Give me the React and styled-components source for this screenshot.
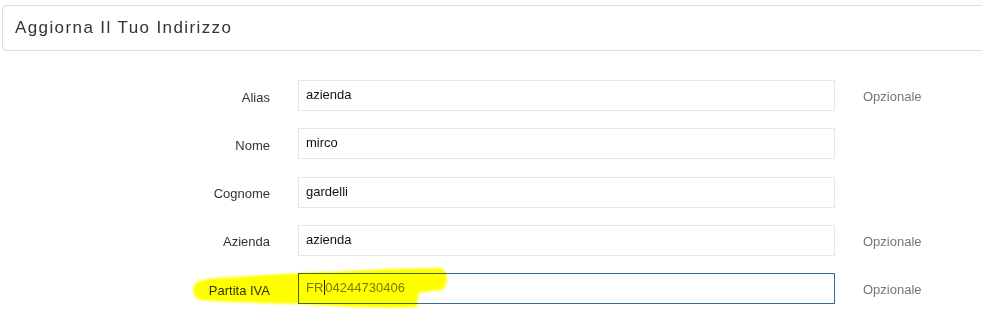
import React from 'react'
import styled, { createGlobalStyle } from 'styled-components'

const GlobalStyle = createGlobalStyle`
  html, body {
    margin: 0;
    padding: 0;
    background: #fff;
    overflow: hidden;
  }
  body {
    font-family: "Liberation Sans", Arial, sans-serif;
    color: #333;
  }
`

const Page = styled.div`
  padding: 5px 0 0 2px;
  width: 982px;
  height: 321px;
  box-sizing: border-box;
`

const Panel = styled.div`
  width: 1000px;
  height: 46px;
  box-sizing: border-box;
  border: 1px solid #dedede;
  border-radius: 4px;
  display: flex;
  align-items: center;
  padding-left: 12px;
`

const Title = styled.h3`
  margin: 0;
  font-size: 17px;
  font-weight: 400;
  letter-spacing: 1.4px;
  color: #333;
`

const Form = styled.div`
  position: relative;
  margin-top: 29px;
  margin-left: -2px;
  display: grid;
  grid-template-columns: 270px 537px auto;
  column-gap: 28px;
  row-gap: 17.3px;
  align-items: center;
`

const Label = styled.label`
  text-align: right;
  font-size: 13px;
  color: #333;
  padding-top: 3px;
`

const Field = styled.div`
  height: 31px;
  box-sizing: border-box;
  border: 1px solid ${({ focused }) => (focused ? '#3b6a8c' : '#e6e6e6')};
  display: flex;
  align-items: center;
  padding: 0 0 2px 7px;
  font-size: 13px;
  color: ${({ focused }) => (focused ? '#7a7a7a' : '#111')};
`

const Caret = styled.span`
  display: inline-block;
  width: 1px;
  height: 15px;
  background: #222;
  margin: 0 0 0 1px;
`

const Hint = styled.span`
  font-size: 13px;
  color: #777;
  padding-top: 2px;
`

const Highlight = styled.svg`
  position: absolute;
  left: 190px;
  top: 180px;
  width: 270px;
  height: 55px;
  mix-blend-mode: multiply;
  pointer-events: none;
`

const rows = [
  { label: 'Alias', value: 'azienda', optional: true },
  { label: 'Nome', value: 'mirco' },
  { label: 'Cognome', value: 'gardelli' },
  { label: 'Azienda', value: 'azienda', optional: true },
  { label: 'Partita IVA', value: 'FR04244730406', optional: true, focused: true },
]

export default function App() {
  return (
    <Page>
      <GlobalStyle />
      <Panel>
        <Title>Aggiorna Il Tuo Indirizzo</Title>
      </Panel>
      <Form>
        {rows.map((r) => (
          <React.Fragment key={r.label}>
            <Label>{r.label}</Label>
            <Field focused={r.focused}>
              {r.focused ? (
                <>
                  {r.value.slice(0, 2)}
                  <Caret />
                  {r.value.slice(2)}
                </>
              ) : (
                r.value
              )}
            </Field>
            <Hint>{r.optional ? 'Opzionale' : ''}</Hint>
          </React.Fragment>
        ))}
        <Highlight viewBox="190 260 270 55">
          <defs>
            <filter id="soft" x="-5%" y="-20%" width="110%" height="140%">
              <feGaussianBlur stdDeviation="0.8" />
            </filter>
          </defs>
          <path
            filter="url(#soft)"
            fill="#ffff00"
            d="M196,283 C203,278 220,278 250,276 L300,273 C350,271 400,268 440,268 C449,269 449,288 441,290 C431,291 421,292 418,294 L417,307 C380,309 330,306 300,304 C260,303 222,302 201,300 C193,298 191,288 196,283 Z"
          />
        </Highlight>
      </Form>
    </Page>
  )
}
